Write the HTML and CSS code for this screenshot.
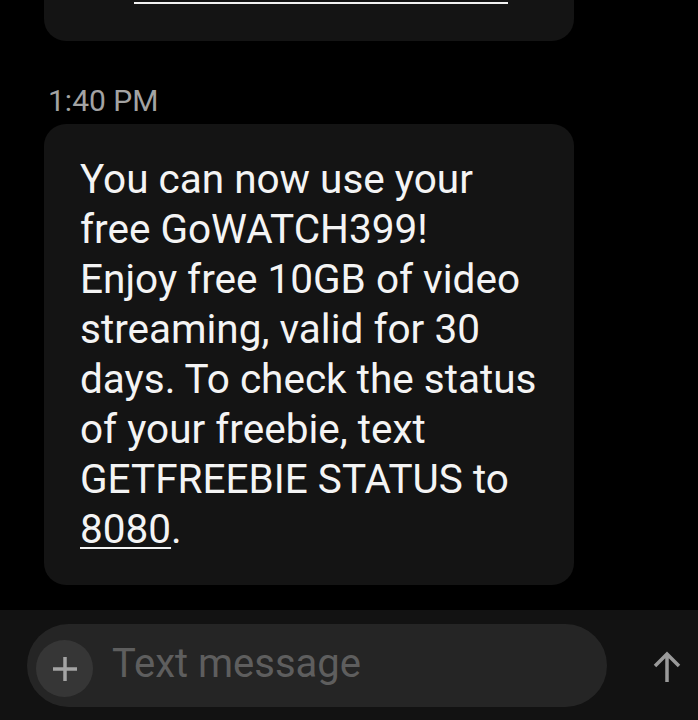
FILE: index.html
```html
<!DOCTYPE html>
<html lang="en">
<head>
    <meta charset="UTF-8">
    <title>Messages</title>
    <link rel="stylesheet" href="styles.css">
</head>
<body>
<div class="screen">
    <!-- Danh sách tin nhắn -->
    <div class="thread">
        <div class="bubble bubble-prev">
            <div class="prev-link"></div>
        </div>

        <div class="time">1:40 PM</div>

        <div class="bubble bubble-main">
            You can now use your<br>
            free GoWATCH399!<br>
            Enjoy free 10GB of video<br>
            streaming, valid for 30<br>
            days. To check the status<br>
            of your freebie, text<br>
            GETFREEBIE STATUS to<br>
            <span class="link">8080</span>.
        </div>
    </div>

    <!-- Ô nhập tin nhắn -->
    <div class="composer">
        <div class="input-pill">
            <div class="plus-btn">
                <svg width="26" height="26" viewBox="0 0 26 26">
                    <path d="M13 1v24M1 13h24" stroke="#a4a4a4" stroke-width="3.5" fill="none"/>
                </svg>
            </div>
            <span class="placeholder">Text message</span>
        </div>
        <div class="send-btn">
            <svg width="30" height="32" viewBox="0 0 30 32">
                <path d="M15 31V3M3 15L15 3l12 12" stroke="#9a9a9a" stroke-width="3.5" fill="none"/>
            </svg>
        </div>
    </div>
</div>
</body>
</html>
```

FILE: styles.css
```css
body {
    margin: 0;
    background-color: #000;
    font-family: Roboto, "Liberation Sans", sans-serif;
}

.screen {
    width: 698px;
    height: 720px;
    overflow: hidden;
    display: flex;
    flex-direction: column;
}

.thread {
    flex: 1;
    padding-left: 44px;
}

.bubble {
    width: 530px;
    box-sizing: border-box;
    background-color: #141414;
    border-radius: 22px;
}

.bubble-prev {
    height: 41px;
    border-radius: 0 0 22px 22px;
    padding-top: 2px;
}

.prev-link {
    margin-left: 90px;
    width: 374px;
    height: 2px;
    background-color: #f2f2f2;
}

.time {
    margin-top: 45px;
    margin-bottom: 8px;
    margin-left: 4px;
    font-size: 30px;
    line-height: 30px;
    color: #a3a3a3;
}

.bubble-main {
    padding: 30px 10px 31px 36px;
    font-size: 40.5px;
    line-height: 50px;
    color: #f4f4f4;
}

.link {
    text-decoration: underline;
    text-underline-offset: 4px;
    text-decoration-thickness: 2px;
}

.composer {
    height: 110px;
    box-sizing: border-box;
    background-color: #121212;
    padding: 14px 0 0 27px;
    display: flex;
    align-items: flex-start;
}

.input-pill {
    width: 580px;
    height: 83px;
    border-radius: 42px;
    background-color: #252525;
    display: flex;
    align-items: center;
    padding-left: 9px;
    box-sizing: border-box;
}

.plus-btn {
    width: 57px;
    height: 57px;
    border-radius: 50%;
    background-color: #363636;
    display: flex;
    align-items: center;
    justify-content: center;
    margin-top: 6px;
}

.placeholder {
    margin-left: 19px;
    margin-bottom: 5px;
    font-size: 40px;
    color: #5e5e5e;
}

.send-btn {
    margin-left: 45px;
    margin-top: 27px;
}
```
